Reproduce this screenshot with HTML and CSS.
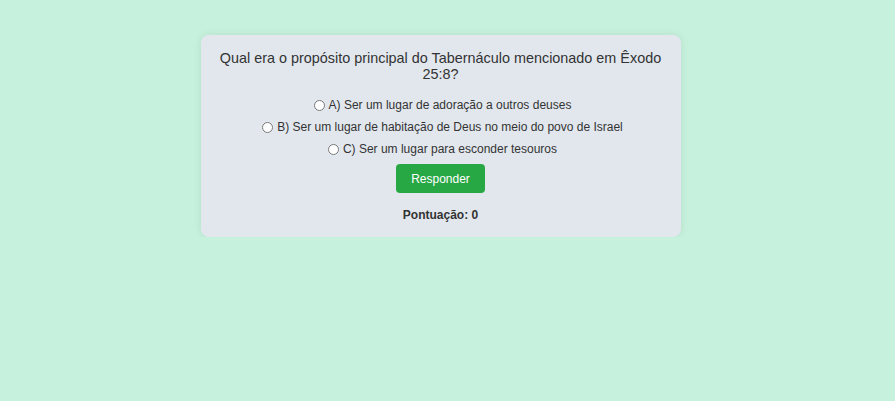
FILE: index.html
```html
<!DOCTYPE html>
<html lang="pt">
<head>
<meta charset="utf-8">
<title>Quiz</title>
<link rel="stylesheet" href="styles.css">
</head>
<body>
<div class="card">
  <h2 class="question">Qual era o propósito principal do Tabernáculo mencionado em Êxodo 25:8?</h2>
  <div class="options">
    <label class="option"><input type="radio" name="q"> A) Ser um lugar de adoração a outros deuses</label>
    <label class="option"><input type="radio" name="q"> B) Ser um lugar de habitação de Deus no meio do povo de Israel</label>
    <label class="option"><input type="radio" name="q"> C) Ser um lugar para esconder tesouros</label>
  </div>
  <button class="btn">Responder</button>
  <p class="score">Pontuação: 0</p>
</div>
</body>
</html>
```
FILE: styles.css
```css
html, body {
  margin: 0;
  padding: 0;
}
body {
  background: #c6f1dc;
  font-family: "Liberation Sans", Arial, sans-serif;
  color: #333;
  font-size: 12px;
  padding-top: 35px;
}
.card {
  width: 440px;
  margin: 0 auto;
  padding: 13px 20px 15px;
  background: #e2e7ee;
  border-radius: 8px;
  box-shadow: 0 0 8px rgba(0,0,0,0.08);
  text-align: center;
  position: relative;
  left: -7px;
}
.question {
  font-size: 14.4px;
  font-weight: normal;
  margin: 0 -1px 16px;
  line-height: 16px;
  padding-top: 2px;
}
.options {
  display: flex;
  flex-direction: column;
  align-items: center;
  gap: 8px;
  position: relative;
  left: 2px;
}
.option {
  display: flex;
  align-items: center;
  gap: 1px;
  line-height: 14px;
}
.option input {
  margin: 0 3px 0 0;
  width: 11px;
  height: 11px;
}
.btn {
  margin-top: 8px;
  background: #28a745;
  color: #fff;
  border: none;
  border-radius: 4px;
  padding: 8px 15px;
  font-family: inherit;
  font-size: 12px;
  line-height: 14px;
  height: 29px;
}
.score {
  font-weight: bold;
  margin: 15px 0 0;
  line-height: 14px;
}
```
